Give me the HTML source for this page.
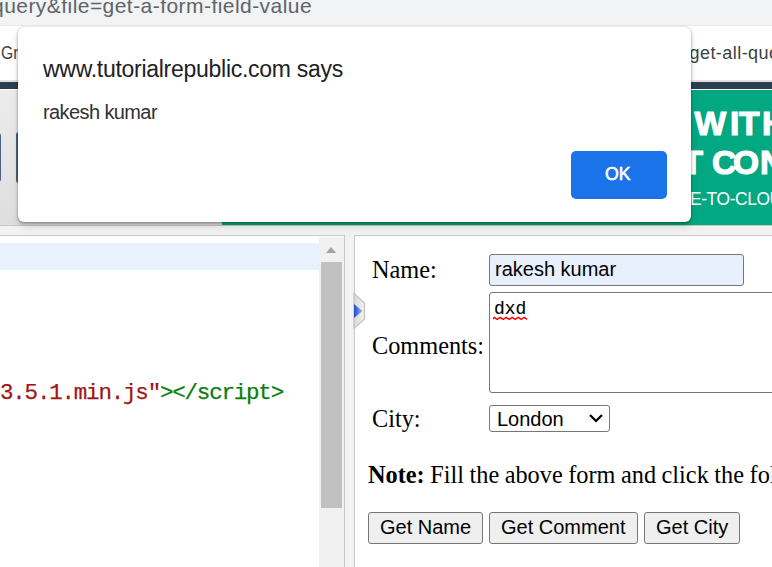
<!DOCTYPE html>
<html><head><meta charset="utf-8">
<style>
*{margin:0;padding:0;box-sizing:border-box}
html,body{width:772px;height:567px;overflow:hidden;background:#fff;position:relative}
body{font-family:"Liberation Sans",sans-serif}
.a{position:absolute;white-space:pre;line-height:1}
.sans{font-family:"Liberation Sans",sans-serif}
.serif{font-family:"Liberation Serif",serif;color:#000}
.mono{font-family:"Liberation Mono",monospace}
.ad{position:absolute;line-height:1;font-family:"Liberation Sans",sans-serif;font-weight:bold;font-size:33.5px;color:#fff;-webkit-text-stroke:1.2px #fff}
</style></head><body>

<!-- address bar -->
<div class="a" style="left:0;top:0;width:772px;height:26px;background:#f1f3f4;border-bottom:1px solid #e9ebed"></div>
<div class="a sans" style="left:-8px;top:-5px;font-size:21px;letter-spacing:0.45px;color:#5f6368">query&amp;file=get-a-form-field-value</div>

<!-- tab/breadcrumb bar -->
<div class="a" style="left:0;top:26px;width:772px;height:54px;background:#fff"></div>
<div class="a sans" style="left:0.5px;top:44.3px;font-size:18px;color:#3c4043;transform:scaleX(0.87);transform-origin:0 0">Gr</div>
<div class="a sans" style="left:689.5px;top:44px;font-size:18px;letter-spacing:0.45px;color:#3c4043">get-all-quotes</div>
<div class="a" style="left:0;top:80px;width:772px;height:2px;background:#e2e2e2"></div>
<div class="a" style="left:0;top:82px;width:772px;height:7px;background:#2c3e50"></div>
<div class="a" style="left:0;top:89px;width:772px;height:1px;background:#fff"></div>

<!-- header -->
<div class="a" style="left:0;top:90px;width:222px;height:135px;background:linear-gradient(#ececec,#dedede)"></div>
<div class="a" style="left:-7.5px;top:133px;width:8.5px;height:49px;border:2px solid #4a6283;border-radius:3px"></div>
<div class="a" style="left:16px;top:132px;width:20px;height:51px;border:2px solid #4a6283;border-radius:3px"></div>
<div class="a" style="left:222px;top:90px;width:550px;height:135px;background:#02a881;overflow:hidden">
  <div class="ad" style="left:472.5px;top:16.5px">W</div>
  <div class="ad" style="left:508px;top:16.5px">I</div>
  <div class="ad" style="left:517px;top:16.5px">T</div>
  <div class="ad" style="left:540px;top:16.5px">H</div>
  <div class="ad" style="left:460.5px;top:56px">T</div>
  <div class="ad" style="left:490px;top:56px">C</div>
  <div class="ad" style="left:511px;top:56px">O</div>
  <div class="ad" style="left:538px;top:56px">N</div>
  <div class="a sans" style="left:467.5px;top:100px;font-size:18px;letter-spacing:-0.4px;color:#fff;transform:scaleX(0.965);transform-origin:0 0">E-TO-CLOUD</div>
</div>

<!-- gray strip -->
<div class="a" style="left:0;top:225px;width:772px;height:10px;background:#f2f2f2;border-top:1px solid #c6c6c6"></div>
<div class="a" style="left:0;top:235px;width:772px;height:332px;background:#f2f2f2"></div>

<!-- left code panel -->
<div class="a" style="left:-1px;top:235px;width:346px;height:340px;background:#fff;border:1px solid #c8c8c8"></div>
<div class="a" style="left:0;top:243px;width:319px;height:27px;background:#e8f2fe"></div>
<div class="a" style="left:319px;top:237px;width:25px;height:330px;background:#f1f1f1"></div>
<div class="a" style="left:326px;top:247px;width:0;height:0;border-left:5.5px solid transparent;border-right:5.5px solid transparent;border-bottom:6px solid #a3a3a3"></div>
<div class="a" style="left:321px;top:262px;width:21px;height:246px;background:#c1c1c1"></div>
<div class="a mono" style="left:0;top:382px;font-size:22.5px;letter-spacing:-1.2px;color:#a31515;-webkit-text-stroke:0.25px #a31515">3.5.1.min.js"<span style="color:#0a7d0a;-webkit-text-stroke:0.25px #0a7d0a">&gt;&lt;/script&gt;</span></div>

<!-- right output panel -->
<div class="a" style="left:354px;top:235px;width:430px;height:340px;background:#fff;border:1px solid #c8c8c8"></div>
<svg class="a" style="left:353px;top:292px" width="14" height="38" viewBox="0 0 14 38">
  <defs>
    <linearGradient id="hg" x1="0" x2="1"><stop offset="0" stop-color="#d8d8d8"/><stop offset="1" stop-color="#f4f4f4"/></linearGradient>
    <linearGradient id="bg" x1="0" x2="1"><stop offset="0" stop-color="#2347c8"/><stop offset="1" stop-color="#9ab8f2"/></linearGradient>
  </defs>
  <polygon points="1,1.5 11.5,11 11.5,27 1,36.5" fill="url(#hg)" stroke="#c0c0c0" stroke-width="1.2"/>
  <polygon points="1,12 9.5,19 1,26" fill="url(#bg)"/>
</svg>

<div class="a serif" style="left:372px;top:258px;font-size:24.3px">Name:</div>
<div class="a" style="left:489px;top:254px;width:255px;height:32px;background:#e8f0fe;border:1px solid #767676;border-radius:3px"></div>
<div class="a sans" style="left:495px;top:259px;font-size:20px;color:#000">rakesh kumar</div>

<div class="a serif" style="left:372px;top:333.5px;font-size:24.3px">Comments:</div>
<div class="a" style="left:489px;top:292px;width:300px;height:101px;background:#fff;border:1px solid #767676;border-radius:3px"></div>
<div class="a mono" style="left:494px;top:300px;font-size:18px;color:#000;-webkit-text-stroke:0.1px #000">dxd</div>
<svg class="a" style="left:493px;top:315.7px" width="36" height="6" viewBox="0 0 36 6"><path d="M0,3 L1.2,1.3 L4.2,3.3 L7.2,1.3 L10.2,3.3 L13.2,1.3 L16.2,3.3 L19.2,1.3 L22.2,3.3 L25.2,1.3 L28.2,3.3 L31.2,1.3 L34.2,3.3" fill="none" stroke="#f00" stroke-width="1.4" stroke-linejoin="round"/></svg>

<div class="a serif" style="left:372px;top:406.5px;font-size:24.3px">City:</div>
<div class="a" style="left:489px;top:405px;width:121px;height:27px;background:#fff;border:1px solid #767676;border-radius:3px"></div>
<div class="a sans" style="left:497px;top:409px;font-size:20px;color:#000">London</div>
<svg class="a" style="left:588px;top:413px" width="16" height="11" viewBox="0 0 16 11"><polyline points="2,2 8,8 14,2" fill="none" stroke="#000" stroke-width="2.2"/></svg>

<div class="a serif" style="left:368px;top:462.5px;font-size:24.3px;word-spacing:-0.55px"><b>Note:</b> Fill the above form and click the following buttons</div>

<div class="a" style="left:368px;top:512px;width:115px;height:32px;background:#efefef;border:1px solid #767676;border-radius:3px"></div>
<div class="a sans" style="left:380px;top:517px;font-size:20px;color:#000">Get Name</div>
<div class="a" style="left:489px;top:512px;width:149px;height:32px;background:#efefef;border:1px solid #767676;border-radius:3px"></div>
<div class="a sans" style="left:501px;top:517px;font-size:20px;color:#000">Get Comment</div>
<div class="a" style="left:644px;top:512px;width:96px;height:32px;background:#efefef;border:1px solid #767676;border-radius:3px"></div>
<div class="a sans" style="left:656px;top:517px;font-size:20px;color:#000">Get City</div>

<!-- alert dialog -->
<div class="a" style="left:18px;top:27px;width:672.5px;height:195px;background:#fff;border-radius:6px;box-shadow:0 0 2px rgba(0,0,0,.28),0 2px 3px rgba(0,0,0,.25),0 5px 8px rgba(0,0,0,.1)"></div>
<div class="a sans" style="left:43px;top:58px;font-size:23px;letter-spacing:-0.28px;color:#202124">www.tutorialrepublic.com says</div>
<div class="a sans" style="left:43px;top:101.5px;font-size:20px;letter-spacing:-0.6px;color:#303134">rakesh kumar</div>
<div class="a" style="left:571px;top:151px;width:96px;height:48px;background:#1a73e8;border-radius:5px"></div>
<div class="a sans" style="left:605px;top:165.7px;font-size:17.7px;color:#fff;-webkit-text-stroke:0.6px #fff">OK</div>

</body></html>
